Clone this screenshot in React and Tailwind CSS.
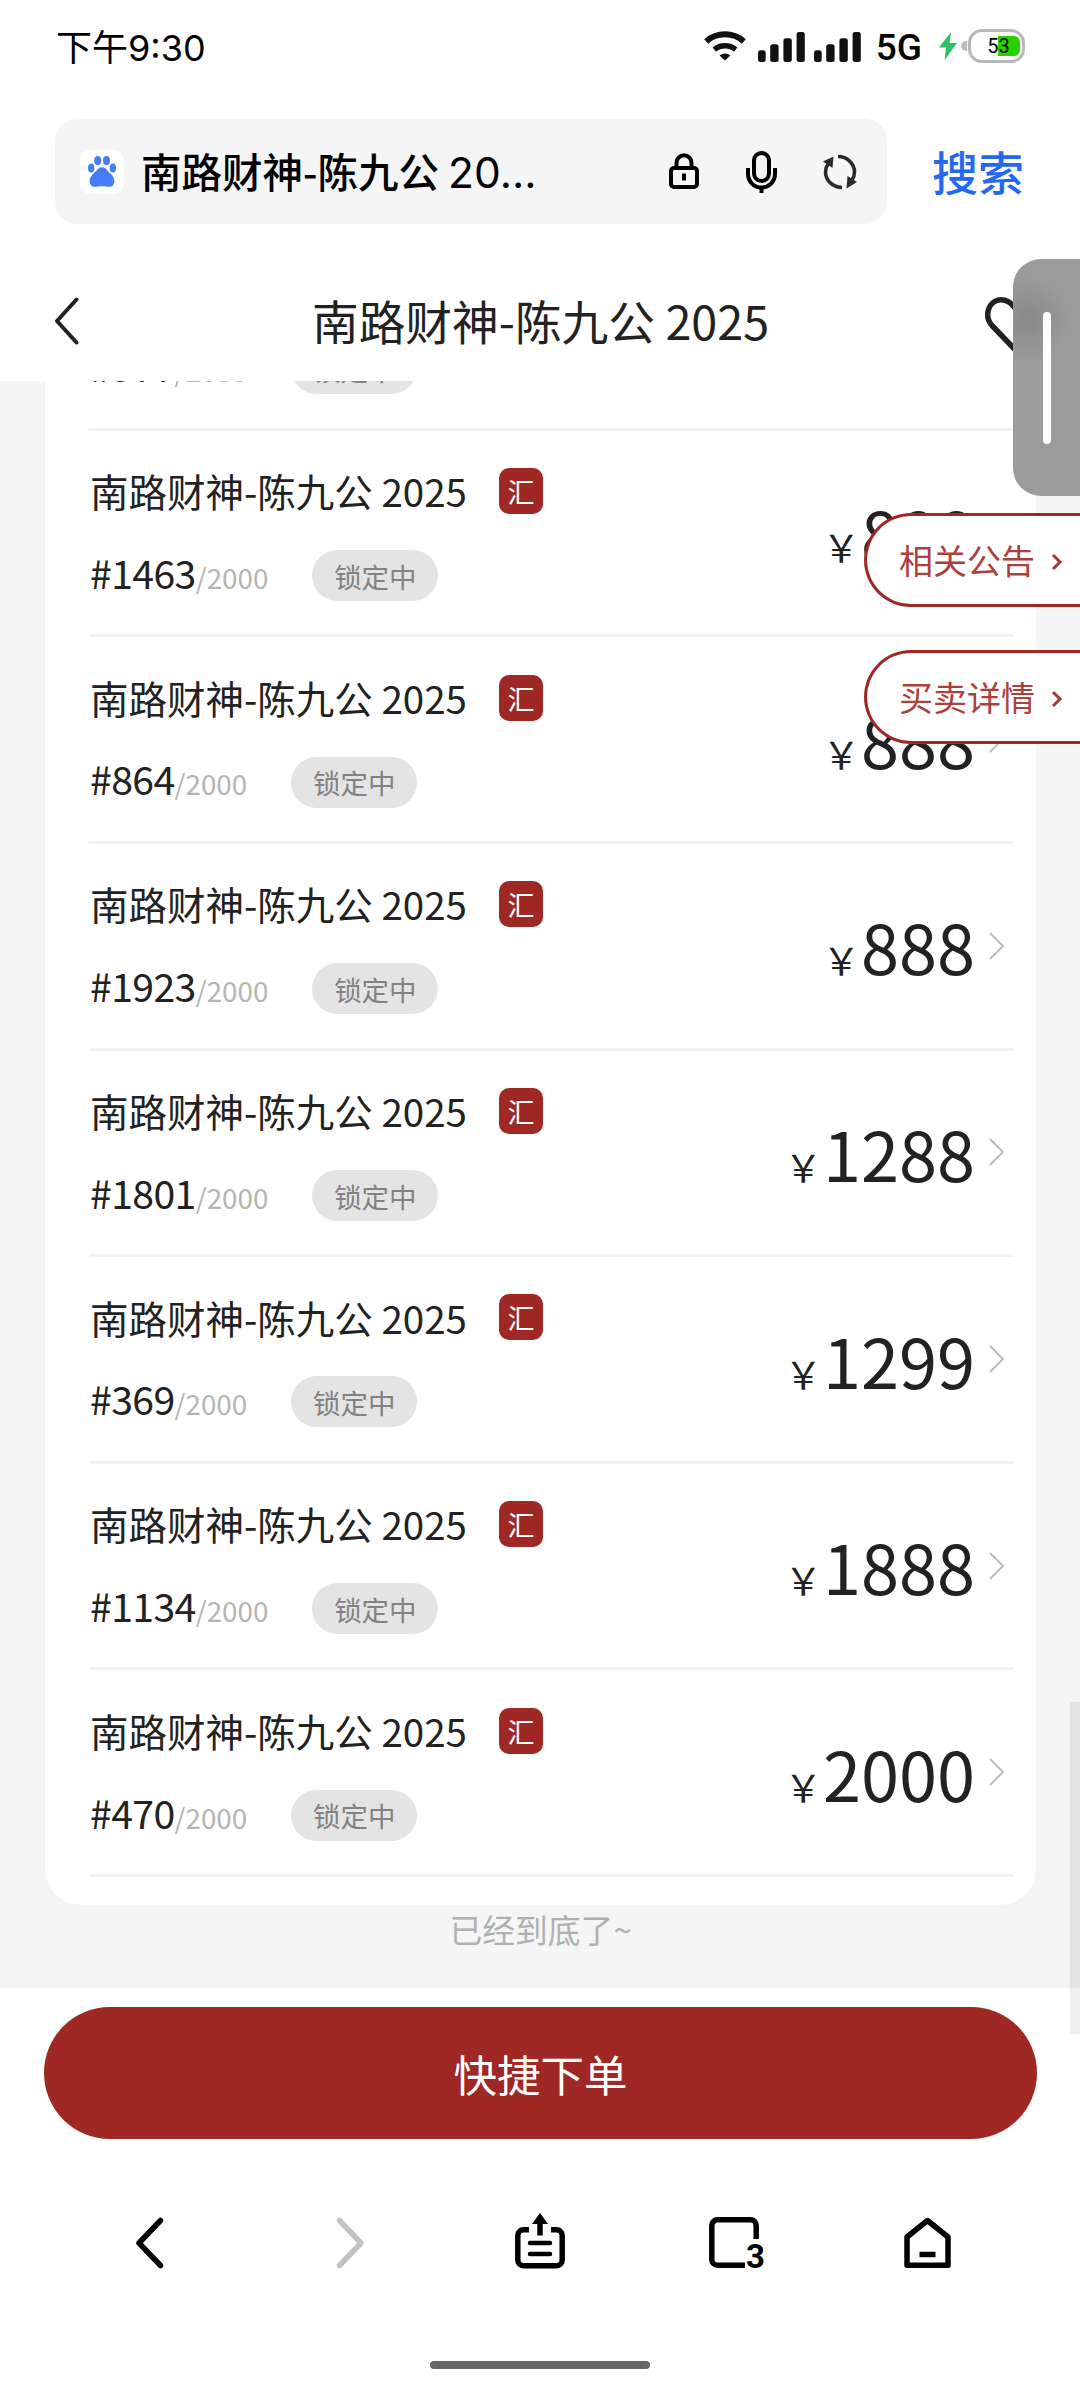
import React from 'react';

const TITLE = '南路财神-陈九公 2025';

const items = [
    { id: 977, price: 888 },
    { id: 1463, price: 888 },
    { id: 864, price: 888 },
    { id: 1923, price: 888 },
    { id: 1801, price: 1288 },
    { id: 369, price: 1299 },
    { id: 1134, price: 1888 },
    { id: 470, price: 2000 },
];

function SignalBars() {
    return (
        <svg width="47" height="30" viewBox="0 0 47 30" fill="#111">
            <rect x="0" y="18.3" width="7.7" height="11.7" rx="2.5" />
            <rect x="12.2" y="12.3" width="8.4" height="17.7" rx="2.5" />
            <rect x="25.4" y="6.3" width="8.4" height="23.7" rx="2.5" />
            <rect x="38.6" y="0" width="8.2" height="30" rx="2.5" />
        </svg>
    );
}

function StatusBar() {
    return (
        <div className="h-[92px] flex items-center justify-between pl-14 pr-[55px] text-black">
            <div className="pt-1 text-[36px] leading-none font-['Inter','Noto_Sans_CJK_SC',sans-serif]">下午9:30</div>
            <div className="flex items-center">
                <svg width="42" height="30" viewBox="0 0 42 30" fill="none" stroke="#111">
                    <path d="M2.2 10.4a28.5 28.5 0 0 1 37.6 0" strokeWidth="6" />
                    <path d="M10.3 18.6a17 17 0 0 1 21.4 0" strokeWidth="5.5" />
                    <path d="M15.6 24.4a8.6 8.6 0 0 1 10.8 0L21 29.6z" fill="#111" stroke="none" />
                </svg>
                <div className="flex gap-[9px] ml-3 pt-px">
                    <SignalBars />
                    <SignalBars />
                </div>
                <div className="ml-[15px] pt-0.5 text-[37px] leading-none font-medium font-['Roboto',sans-serif]">5G</div>
                <svg className="ml-[17px]" width="18" height="28" viewBox="0 0 18 28" fill="#2cbf66">
                    <path d="M12 0 0 15.5h7L5.6 28 18 11h-7.4z" />
                </svg>
                <div className="ml-1 w-[6px] h-[10px] rounded-l-full bg-[#bdbdbd]" />
                <div className="relative ml-px w-[57px] h-[34px] rounded-[14px] border-[3px] border-[#b9b9b9] flex items-center justify-center">
                    <div className="absolute right-[2px] top-1 w-[22px] h-5 rounded-r-[6px] bg-[#2ad100]" />
                    <span className="relative pl-1 text-[20px] leading-none font-['Roboto',sans-serif]">53</span>
                </div>
            </div>
        </div>
    );
}

function SearchBar() {
    return (
        <div className="mt-[27px] ml-[55px] mr-[56px] flex items-center justify-between">
            <div className="w-[832px] h-[105px] rounded-[22px] bg-[#f5f5f5] pl-[25px] pr-[30px] flex items-center">
                <div className="w-11 h-11 rounded-[10px] bg-white flex items-center justify-center">
                    <svg width="28" height="31" viewBox="0 0 28 31" fill="#467df6">
                        <ellipse cx="9.7" cy="4.6" rx="3.5" ry="4.6" />
                        <ellipse cx="18.5" cy="4.6" rx="3.5" ry="4.6" />
                        <ellipse cx="3.2" cy="12" rx="3.2" ry="4.6" />
                        <ellipse cx="24.8" cy="12" rx="3.2" ry="4.6" />
                        <path d="M14 11.2c2.2 0 3.5 1 5 2.8 2 2.4 7.4 6 7.4 11 0 3.5-2 5.8-5.4 5.8-2.6 0-4-.6-7-.6s-4.4.6-7 .6c-3.4 0-5.4-2.3-5.4-5.8 0-5 5.4-8.6 7.4-11 1.5-1.8 2.8-2.8 5-2.8z" />
                    </svg>
                </div>
                <div className="ml-[17px] pt-0.5 text-[40.5px] leading-none whitespace-pre text-black font-medium font-['Noto_Sans_CJK_SC',sans-serif]">
                    南路财神-陈九公 <span className="text-[42.5px] font-normal font-['Inter',sans-serif]">20...</span>
                </div>
                <div className="ml-auto mb-0.5 flex items-center">
                    <svg width="30" height="36" viewBox="0 0 30 36" fill="none" stroke="#000" strokeWidth="4">
                        <rect x="2" y="15" width="26" height="19" rx="3" />
                        <path d="M7.5 15V9.8a7.5 7.5 0 0 1 15 0V15M15 20.5v7" />
                    </svg>
                    <svg className="ml-[47px] mt-0.5" width="31" height="42" viewBox="0 0 31 42" fill="none" stroke="#000" strokeWidth="4">
                        <rect x="8" y="2" width="15" height="28" rx="7.5" />
                        <path d="M2 17v6a13.5 13.5 0 0 0 27 0v-6M15.5 35v7" />
                    </svg>
                    <svg className="ml-[46px] mt-0.5" width="34" height="36" viewBox="0 0 34 36" fill="none" stroke="#2b2b2b" strokeWidth="3.6">
                        <path d="M15 2.5c9 0 16.5 7 16.5 15.5 0 3.5-1 6-2.8 8.5M19 33.5C10 33.5 2.5 26.5 2.5 18c0-3.5 1-6 2.8-8.5" />
                        <path d="M0 7.5 10.5 2.5 9.5 14zM34 28l-10.5 6.5 1-12.5z" fill="#2b2b2b" stroke="none" />
                    </svg>
                </div>
            </div>
            <div className="pb-1 text-[46px] leading-none font-medium text-[#2468f2] font-['Noto_Sans_CJK_SC',sans-serif]">搜索</div>
        </div>
    );
}

function PageHeader() {
    return (
        <div className="h-[157px] pt-[36px] pl-[54px] pr-[36px] flex items-center justify-between">
            <svg width="25" height="48" viewBox="0 0 25 48" fill="none" stroke="#222" strokeWidth="4" strokeLinecap="round" strokeLinejoin="round">
                <path d="M22.5 2.5 3 24l19.5 21.5" />
            </svg>
            <h1 className="pl-[17px] text-[46.7px] leading-none text-[#222] whitespace-pre">{TITLE}</h1>
            <svg className="mt-2" width="59" height="56" viewBox="0 0 59 56" fill="none" stroke="#222" strokeWidth="5.5" strokeLinejoin="round">
                <path d="M29.5 52 7 28.5C-1.5 19 3.5 3 16 2.8c6.5 0 10.5 3.4 13.5 7.7 3-4.3 7-7.7 13.5-7.7 12.5.2 17.5 16.2 9 25.7z" />
            </svg>
        </div>
    );
}

function ItemRow({ item }) {
    return (
        <div className="h-[206.64px] shrink-0 flex items-center justify-between border-b-[3px] border-[#f2f2f2] text-[#222]">
            <div className="pt-1 pl-px">
                <div className="flex items-center h-[46px]">
                    <span className="pb-px text-[38.5px] leading-none whitespace-pre">{TITLE}</span>
                    <span className="ml-8 w-11 h-[46px] rounded-[10px] bg-[#9f2825] text-white text-[27px] leading-none pt-px flex items-center justify-center">汇</span>
                </div>
                <div className="mt-9 flex items-center h-[51px]">
                    <div className="pb-1.5 leading-none whitespace-pre">
                        <span className="text-[39.2px] tracking-[-0.6px]">#{item.id}</span>
                        <span className="text-[27.8px] text-[#b4b4b4]">/2000</span>
                    </div>
                    <span className="ml-11 w-[126px] h-[51px] pt-0.5 rounded-full bg-[#e4e4e4] text-[#828282] text-[27.5px] leading-none flex items-center justify-center">锁定中</span>
                </div>
            </div>
            <div className="flex items-center pr-2">
                <div className="pt-0.5 leading-none">
                    <span className="text-[37.5px] mr-px">￥</span>
                    <span className="text-[68.5px]">{item.price}</span>
                </div>
                <svg className="ml-3.5" width="16" height="28" viewBox="0 0 16 28" fill="none" stroke="#bbb" strokeWidth="2">
                    <path d="m1 1 13 13L1 27" />
                </svg>
            </div>
        </div>
    );
}

function SideLink({ label }) {
    return (
        <div className="w-[216px] h-[94px] rounded-l-full border-[3px] border-r-0 border-[#9f2825] bg-white text-[#ab403d] pl-8 flex items-center">
            <span className="text-[34px] leading-none">{label}</span>
            <svg className="ml-4 mt-1" width="12" height="18" viewBox="0 0 12 18" fill="none" stroke="#a63a37" strokeWidth="3">
                <path d="m2 2 7 7-7 7" />
            </svg>
        </div>
    );
}

function BottomNav() {
    return (
        <div className="mt-[72px] pl-[128px] h-[64px] flex items-center text-black">
            <svg width="42" height="52" viewBox="0 0 42 52" fill="none" stroke="#000" strokeWidth="5.5" strokeLinecap="round" strokeLinejoin="round">
                <path d="M32.5 3.5 11 26l21.5 22.5" />
            </svg>
            <svg className="ml-[159px]" width="42" height="52" viewBox="0 0 42 52" fill="none" stroke="#c2c2c2" strokeWidth="5.5" strokeLinecap="round" strokeLinejoin="round">
                <path d="M10.5 3.5 32 26 10.5 48.5" />
            </svg>
            <svg className="ml-36 mb-[5px]" width="50" height="56" viewBox="0 0 50 56" fill="none" stroke="#000" strokeWidth="5.5">
                <path d="M14 16.7H8.5a5.7 5.7 0 0 0-5.7 5.7V47a5.7 5.7 0 0 0 5.7 5.7h33a5.7 5.7 0 0 0 5.7-5.7V22.4a5.7 5.7 0 0 0-5.7-5.7H36" />
                <path d="M15 30h20M15 41h20" strokeWidth="4.5" strokeLinecap="round" />
                <path d="M25 22.5V9" />
                <path d="M25 0 17 11h16z" fill="#000" stroke="none" />
            </svg>
            <div className="relative ml-36">
                <svg width="50" height="52" viewBox="0 0 50 52" fill="none" stroke="#000" strokeWidth="5.5">
                    <path d="M36 48.2H8.5a5.7 5.7 0 0 1-5.7-5.7v-34a5.7 5.7 0 0 1 5.7-5.7h33a5.7 5.7 0 0 1 5.7 5.7V22" />
                </svg>
                <span className="absolute left-[37px] top-[23px] text-[33px] leading-none font-bold font-['Roboto',sans-serif]">3</span>
            </div>
            <svg className="ml-[145px]" width="47" height="52" viewBox="0 0 47 52" fill="none" stroke="#000" strokeWidth="5.5" strokeLinejoin="round">
                <path d="M23.5 3.5 44 20v28.2H3V20z" />
                <path d="M15.5 37.5h16" />
            </svg>
        </div>
    );
}

export default function App() {
    return (
        <div className="relative w-[1080px] h-[2400px] overflow-hidden bg-white font-['Noto_Sans_CJK_SC',sans-serif]">
            <StatusBar />
            <SearchBar />
            <PageHeader />

            {/* Scrolled list, aligned to its end */}
            <div className="h-[1607px] bg-[#f4f6f6] pl-[45px] pr-[44px] flex flex-col justify-end overflow-hidden">
                <div className="shrink-0 bg-white rounded-b-[36px] pl-11 pr-[23px] pb-7">
                    {items.map((item) => (
                        <ItemRow key={item.id} item={item} />
                    ))}
                </div>
                <div className="shrink-0 h-[83px] pt-2 text-center text-[32.8px] leading-none text-[#b0b0b0]">已经到底了~</div>
            </div>

            <button className="block mt-[19px] mx-11 w-[993px] h-[132px] pt-0.5 rounded-full bg-[#9f2825] text-white text-[43.5px] leading-none">快捷下单</button>

            <BottomNav />
            <div className="mx-auto mt-[86px] w-[220px] h-2 rounded-full bg-[#666]" />

            {/* Floating layers */}
            <div className="absolute right-0 top-[513px] flex flex-col gap-[43px]">
                <SideLink label="相关公告" />
                <SideLink label="买卖详情" />
            </div>
            <div className="absolute right-0 top-[259px] w-[67px] h-[237px] rounded-l-[28px] bg-[#9b9b9b] bg-[radial-gradient(circle_at_14px_60px,#8a8a8a_0px,#8e8e8e_14px,#9b9b9b_42px)] pl-[30px] flex items-center">
                <div className="w-2 h-[132px] rounded-full bg-white" />
            </div>
            <div className="absolute right-0 top-[1702px] w-2.5 h-[332px] bg-[#00000011]" />
        </div>
    );
}
